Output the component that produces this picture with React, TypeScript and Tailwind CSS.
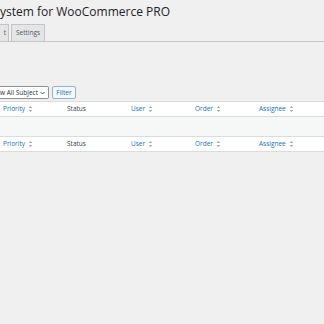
import React from "react";

const cols = [
  { label: "Priority", sortable: true },
  { label: "Status", sortable: false },
  { label: "User", sortable: true },
  { label: "Order", sortable: true },
  { label: "Assignee", sortable: true },
];

const SortIcon = () => (
  <svg width="5" height="8" viewBox="0 0 5 8" className="ml-[3px]">
    <path d="M0.6 3 L2.5 1 L4.4 3 Z" fill="#a7aaad" />
    <path d="M0.6 5 L2.5 7 L4.4 5 Z" fill="#a7aaad" />
  </svg>
);

const HeaderRow = () => (
  <div className="grid grid-cols-[64px_64px_64px_64px_68px] h-4 items-center bg-white border-t border-b border-[#dcdcde]">
    {cols.map((c) => (
      <div key={c.label} className="flex items-center pl-[3px] text-[6.5px] leading-none whitespace-nowrap">
        <span className={c.sortable ? "text-[#2271b1]" : "text-[#3c434a]"}>{c.label}</span>
        {c.sortable && <SortIcon />}
      </div>
    ))}
  </div>
);

export default function App() {
  return (
    <div
      className="w-[324px] h-[324px] bg-[#f0f0f1] overflow-hidden"
      style={{ fontFamily: '"Open Sans", "Noto Sans", sans-serif' }}
    >
      {/* Title */}
      <h1 className="text-[12px] leading-none text-[#1d2327] pt-[6px] h-[25px] whitespace-nowrap">
        ystem for WooCommerce PRO
      </h1>

      {/* Tabs */}
      <div className="flex items-end h-[17px] border-b border-[#c3c4c7]">
        <div className="h-[17px] w-[9px] bg-[#e5e5e6] border border-l-0 border-b-0 border-[#c3c4c7] text-[6.5px] text-[#50575e] flex items-center justify-end pr-[2px]">
          t
        </div>
        <div className="ml-[2px] h-[17px] w-[34px] bg-[#e5e5e6] border border-b-0 border-[#c3c4c7] text-[6.5px] text-[#50575e] flex items-center justify-center">
          Settings
        </div>
      </div>

      {/* Filters */}
      <div className="flex items-center mt-[44px] h-[13px]">
        <div className="h-[13px] w-[49px] bg-white border border-l-0 border-[#8c8f94] rounded-r-[2px] text-[6.5px] text-[#2c3338] flex items-center justify-between pr-[3px] whitespace-nowrap">
          <span>w All Subject</span>
          <svg width="5" height="4" viewBox="0 0 5 4">
            <path d="M0.5 1 L2.5 3 L4.5 1" stroke="#2c3338" strokeWidth="0.8" fill="none" />
          </svg>
        </div>
        <div className="ml-[3px] h-[13px] w-[24px] bg-[#f6f7f7] border border-[#8fb3d6] rounded-[2px] text-[6.5px] text-[#2271b1] flex items-center justify-center">
          Filter
        </div>
      </div>

      {/* Table */}
      <div className="mt-[2px]">
        <HeaderRow />
        <div className="h-[19px] bg-[#f6f7f7]" />
        <HeaderRow />
      </div>
    </div>
  );
}
